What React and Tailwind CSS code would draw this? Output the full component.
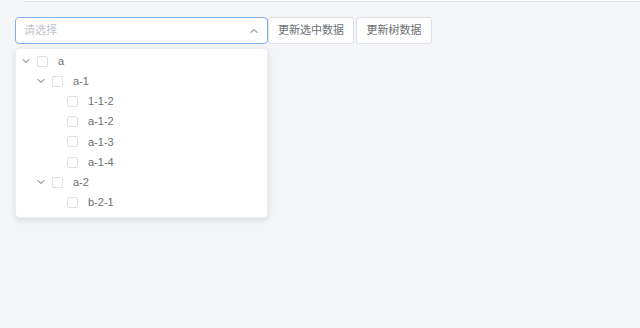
import { ChevronUp, ChevronDown } from "lucide-react";

const tree = [
  { label: "a", level: 0, open: true },
  { label: "a-1", level: 1, open: true },
  { label: "1-1-2", level: 2 },
  { label: "a-1-2", level: 2 },
  { label: "a-1-3", level: 2 },
  { label: "a-1-4", level: 2 },
  { label: "a-2", level: 1, open: true },
  { label: "b-2-1", level: 2 },
];

const indent = ["pl-[2px]", "pl-[17px]", "pl-[32px]"];

function Row({ node }) {
  return (
    <div className={`flex items-center h-[20.2px] ${indent[node.level]}`}>
      <span className="w-[16px] h-[16px] flex items-center justify-center text-[#606266]">
        {node.open !== undefined && <ChevronDown size={12} strokeWidth={2} />}
      </span>
      <span className="ml-[3px] w-[11px] h-[11px] border border-[#dcdfe6] rounded-[2px] bg-white" />
      <span className="ml-[10px] text-[11px] text-[#6b6e73]">{node.label}</span>
    </div>
  );
}

export default function App() {
  return (
    <div
      className="w-[640px] h-[328px] bg-[#f5f6f8] overflow-hidden"
      style={{ fontFamily: '"Liberation Sans", "Noto Sans CJK SC", sans-serif' }}
    >
      <div className="ml-[24px] h-[2px] bg-[#f9fafb] border-b border-[#e2e4e8]" />
      <div className="pl-[15px] pt-[15px] flex items-start">
        <div className="flex flex-col">
          <div className="w-[253px] h-[27px] bg-white border border-[#7fb1ee] rounded-[4px] flex items-center justify-between pl-[8px] pr-[7px]">
            <span className="text-[11px] text-[#c0c4cc]">请选择</span>
            <ChevronUp size={12} strokeWidth={2} className="text-[#606266]" />
          </div>
          <div className="mt-[4px] w-[253px] bg-white rounded-[4px] border border-[#ebeef5] shadow-[0_2px_6px_rgba(0,0,0,0.12)] pt-[2px] pb-[4px]">
            {tree.map((n, i) => (
              <Row key={i} node={n} />
            ))}
          </div>
        </div>
        <button className="w-[86px] h-[27px] bg-white border border-[#dcdfe6] rounded-[3px] text-[11px] text-[#6b6e73]">
          更新选中数据
        </button>
        <button className="ml-[2px] w-[76px] h-[27px] bg-white border border-[#dcdfe6] rounded-[3px] text-[11px] text-[#6b6e73]">
          更新树数据
        </button>
      </div>
    </div>
  );
}
